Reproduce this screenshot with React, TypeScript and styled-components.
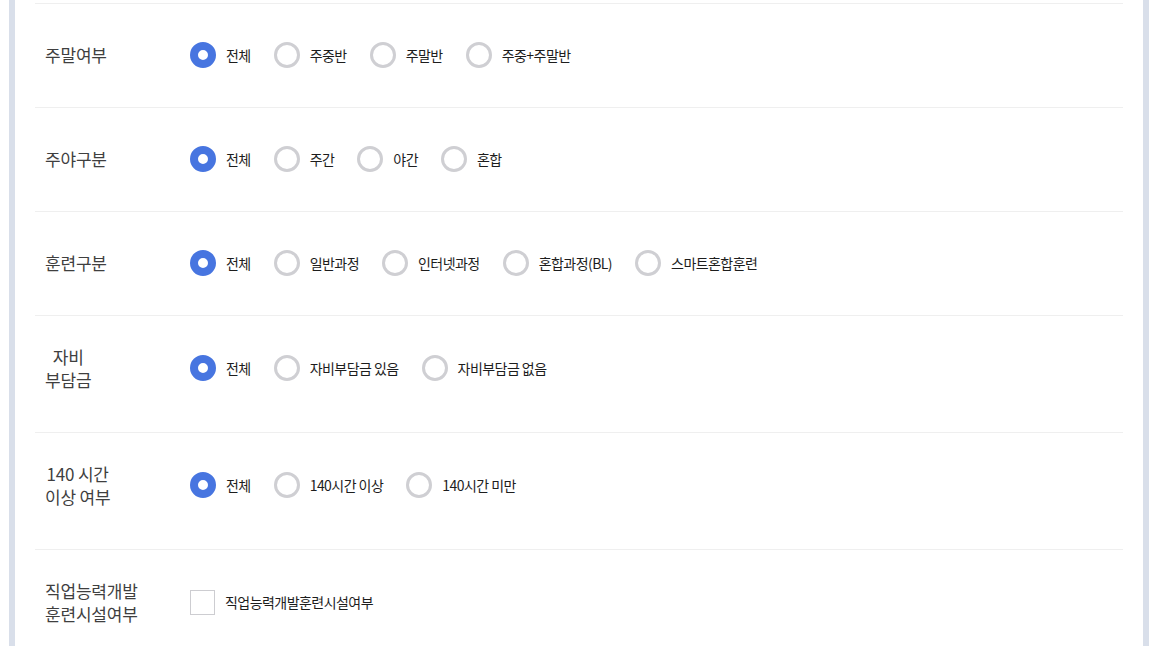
import React, { useState } from 'react';
import styled, { createGlobalStyle } from 'styled-components';

const GlobalStyle = createGlobalStyle`
  html, body {
    margin: 0;
    padding: 0;
    background: #ffffff;
  }
  body {
    font-family: 'Noto Sans CJK KR', 'Noto Sans', sans-serif;
  }
`;

const Page = styled.div`
  padding: 0 5px 0 9px;
  height: 646px;
  overflow: hidden;
`;

const Panel = styled.div`
  border-left: 6px solid #d9dfea;
  border-right: 6px solid #d9dfea;
  background: #fff;
  padding: 3px 20px 0;
  min-height: 643px;
`;

const Row = styled.div<{ $tall?: boolean }>`
  display: flex;
  align-items: center;
  border-top: 1px solid #efefef;
  padding: ${p => (p.$tall ? '29px 0 41px' : '29px 0 31px')};
  min-height: 43px;
`;

const LabelCell = styled.div`
  display: flex;
  width: 145px;
  padding-left: 10px;
  flex-shrink: 0;
`;

const Label = styled.span`
  display: block;
  text-align: center;
  font-size: 17px;
  letter-spacing: -0.2px;
  line-height: 23px;
  color: #3f3f3f;
`;

const Options = styled.div`
  display: flex;
  align-items: center;
  gap: 23px;
`;

const Option = styled.label`
  display: flex;
  align-items: center;
  gap: 10px;
  cursor: pointer;
  font-size: 14px;
  letter-spacing: -0.55px;
  color: #1d1d1d;
`;

const Radio = styled.span<{ $checked: boolean }>`
  box-sizing: border-box;
  width: 26px;
  height: 26px;
  border-radius: 50%;
  border: ${p => (p.$checked ? '8px solid #4775e0' : '3px solid #cfcfd3')};
  background: #fff;
  flex-shrink: 0;
`;

const Check = styled.span`
  box-sizing: border-box;
  width: 25px;
  height: 25px;
  border: 1px solid #cdcdd1;
  background: #fff;
  flex-shrink: 0;
`;

interface GroupProps {
  label: React.ReactNode;
  items: string[];
  tall?: boolean;
}

const RadioGroup: React.FC<GroupProps> = ({ label, items, tall }) => {
  const [value, setValue] = useState(0);
  return (
    <Row $tall={tall}>
      <LabelCell>
        <Label>{label}</Label>
      </LabelCell>
      <Options>
        {items.map((item, i) => (
          <Option key={item} onClick={() => setValue(i)}>
            <Radio $checked={value === i} />
            {item}
          </Option>
        ))}
      </Options>
    </Row>
  );
};

const App: React.FC = () => {
  return (
    <Page>
      <GlobalStyle />
      <Panel>
        <RadioGroup label="주말여부" items={['전체', '주중반', '주말반', '주중+주말반']} />
        <RadioGroup label="주야구분" items={['전체', '주간', '야간', '혼합']} />
        <RadioGroup
          label="훈련구분"
          items={['전체', '일반과정', '인터넷과정', '혼합과정(BL)', '스마트혼합훈련']}
        />
        <RadioGroup
          tall
          label={<>자비<br />부담금</>}
          items={['전체', '자비부담금 있음', '자비부담금 없음']}
        />
        <RadioGroup
          tall
          label={<>140 시간<br />이상 여부</>}
          items={['전체', '140시간 이상', '140시간 미만']}
        />
        <Row $tall>
          <LabelCell>
            <Label>직업능력개발<br />훈련시설여부</Label>
          </LabelCell>
          <Options>
            <Option>
              <Check />
              직업능력개발훈련시설여부
            </Option>
          </Options>
        </Row>
      </Panel>
    </Page>
  );
};

export default App;
